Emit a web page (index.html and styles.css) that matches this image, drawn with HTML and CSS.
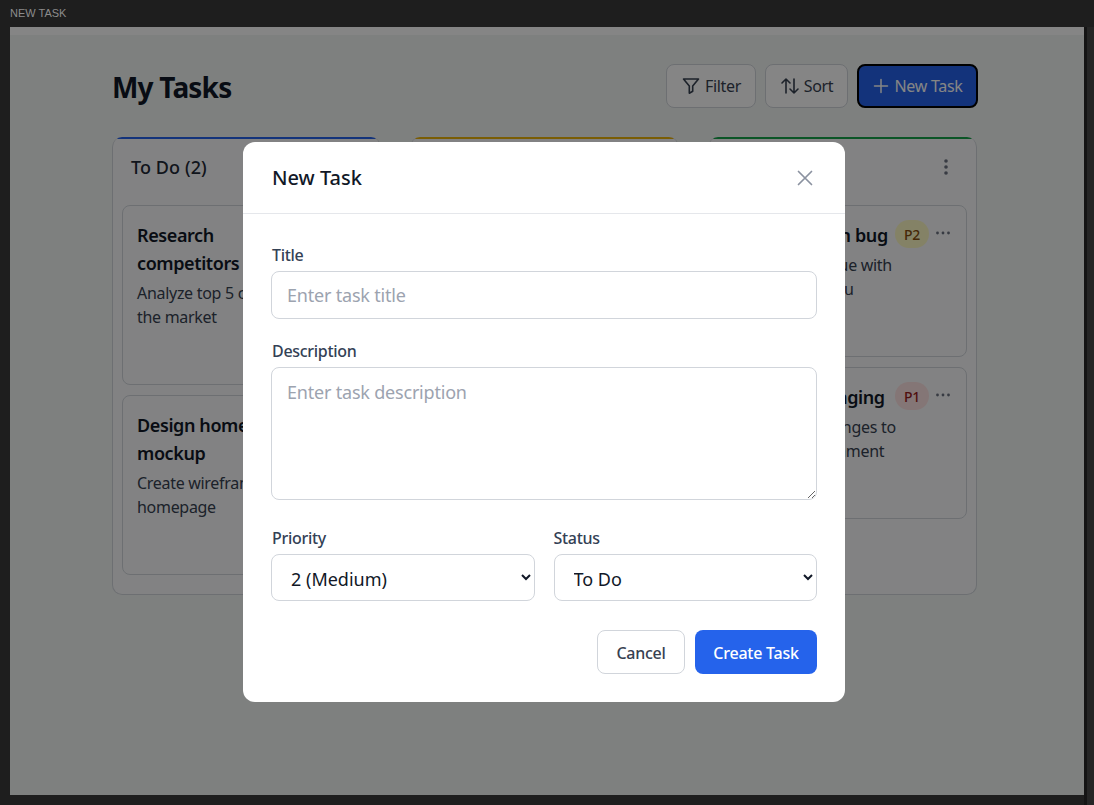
FILE: index.html
```html
<!DOCTYPE html>
<html lang="en">
<head>
    <meta charset="UTF-8" />
    <meta name="viewport" content="width=device-width, initial-scale=1.0"/>
    <title>New Task</title>
    <link rel="stylesheet" href="styles.css">
</head>
<body>
<div class="frame">
    <div class="frame-title">NEW TASK</div>
    <div class="frame-main">
        <div class="stage">
            <div class="strip"></div>
            <div class="page">
                <div class="page-head">
                    <h1>My Tasks</h1>
                    <div class="actions">
                        <button class="btn btn-filter">
                            <svg width="20" height="20" viewBox="0 0 20 20" fill="none" stroke="currentColor" stroke-width="1.6" stroke-linejoin="round"><path d="M2.5 3h15l-5.8 7v5.2l-3.4 2v-7.2z"/></svg>
                            Filter
                        </button>
                        <button class="btn btn-sort">
                            <svg width="20" height="20" viewBox="0 0 20 20" fill="none" stroke="currentColor" stroke-width="1.6" stroke-linecap="round" stroke-linejoin="round"><path d="M6 17V3M2 7l4-4 4 4M14 3v14M10 13l4 4 4-4"/></svg>
                            Sort
                        </button>
                        <button class="btn btn-new">
                            <svg width="18" height="18" viewBox="0 0 18 18" fill="none" stroke="currentColor" stroke-width="1.5" stroke-linecap="round"><path d="M9 2.5v13M2.5 9h13"/></svg>
                            New Task
                        </button>
                    </div>
                </div>

                <div class="board">
                    <!-- To Do -->
                    <section class="column col-todo">
                        <div class="column-head"><h2>To Do (2)</h2></div>
                        <article class="card">
                            <h3>Research<br>competitors</h3>
                            <p>Analyze top 5 competitors in<br>the market</p>
                        </article>
                        <article class="card">
                            <h3>Design homepage<br>mockup</h3>
                            <p>Create wireframes for the<br>homepage</p>
                        </article>
                    </section>

                    <!-- In Progress -->
                    <section class="column col-progress">
                        <div class="column-head"><h2>In Progress (0)</h2></div>
                    </section>

                    <!-- Review -->
                    <section class="column col-review">
                        <div class="column-head">
                            <h2>Review (2)</h2>
                            <svg class="dots" width="6" height="18" viewBox="0 0 6 18" fill="currentColor"><circle cx="3" cy="3" r="1.8"/><circle cx="3" cy="9" r="1.8"/><circle cx="3" cy="15" r="1.8"/></svg>
                        </div>
                        <article class="card">
                            <div class="card-top">
                                <h3>Fix navigation bug</h3>
                                <span class="badge badge-p2">P2</span>
                                <svg class="more" width="16" height="4" viewBox="0 0 16 4" fill="currentColor"><circle cx="2.5" cy="2" r="1.4"/><circle cx="8" cy="2" r="1.4"/><circle cx="13.5" cy="2" r="1.4"/></svg>
                            </div>
                            <p>Resolve the issue with<br>the profile menu</p>
                        </article>
                        <article class="card">
                            <div class="card-top">
                                <h3>Deploy on staging</h3>
                                <span class="badge badge-p1">P1</span>
                                <svg class="more" width="16" height="4" viewBox="0 0 16 4" fill="currentColor"><circle cx="2.5" cy="2" r="1.4"/><circle cx="8" cy="2" r="1.4"/><circle cx="13.5" cy="2" r="1.4"/></svg>
                            </div>
                            <p>Push latest changes to<br>staging environment</p>
                        </article>
                    </section>
                </div>
            </div>

            <!-- Модалка -->
            <div class="overlay">
                <div class="modal">
                    <div class="modal-head">
                        <h2>New Task</h2>
                        <svg class="close" width="20" height="20" viewBox="0 0 20 20" fill="none" stroke="currentColor" stroke-width="1.7" stroke-linecap="round"><path d="M3.5 3.5l13 13M16.5 3.5l-13 13"/></svg>
                    </div>
                    <form class="modal-body">
                        <label for="task-title">Title</label>
                        <input id="task-title" type="text" placeholder="Enter task title">

                        <label for="task-desc">Description</label>
                        <textarea id="task-desc" placeholder="Enter task description"></textarea>

                        <div class="form-row">
                            <div class="form-field">
                                <label for="task-priority">Priority</label>
                                <select id="task-priority">
                                    <option>2 (Medium)</option>
                                </select>
                            </div>
                            <div class="form-field">
                                <label for="task-status">Status</label>
                                <select id="task-status">
                                    <option>To Do</option>
                                </select>
                            </div>
                        </div>

                        <div class="modal-actions">
                            <button type="button" class="btn-cancel">Cancel</button>
                            <button type="button" class="btn-create">Create Task</button>
                        </div>
                    </form>
                </div>
            </div>
        </div>
        <div class="gutter"></div>
    </div>
</div>
</body>
</html>
```

FILE: styles.css
```css
*{box-sizing:border-box;}
html,body{margin:0;height:100%;}
body{background:#1e1e1e;font-family:"Noto Sans",sans-serif;color:#111827;overflow:hidden;}

.frame{height:805px;display:flex;flex-direction:column;}
.frame-title{height:27px;padding-left:10px;font:11px/27px "Liberation Sans",sans-serif;color:#8c8c8c;}
.frame-main{flex:1;display:flex;padding:0 0 10px 10px;}
.stage{flex:1;position:relative;overflow:hidden;background:#f2f6f4;}
.gutter{width:10px;margin-bottom:-10px;background:#252525;border-left:3px solid #141414;}
.strip{height:8px;background:#fff;}

.page{width:865px;margin-left:102px;padding-top:29px;}
.page-head{display:flex;justify-content:space-between;align-items:center;margin-bottom:29px;}
h1{margin:0;padding-top:2px;font-size:28px;line-height:42px;font-weight:700;color:#111827;letter-spacing:-.8px;}
.actions{display:flex;gap:9px;margin-right:-1px;}
.btn{height:44px;display:flex;align-items:center;justify-content:center;gap:4px;font:16px "Noto Sans",sans-serif;letter-spacing:-.3px;border-radius:8px;border:1px solid #d1d5db;background:#fff;color:#374151;padding:0;}
.btn-filter{width:90px;}
.btn-sort{width:83px;}
.btn-new{width:121px;background:#2563eb;color:#fff;border:2px solid #000;}

.board{display:grid;grid-template-columns:repeat(3,1fr);column-gap:29px;}
.column{height:458px;padding:0 9px;background:#f9fafb;border:1px solid #d1d5db;border-top:0;border-radius:10px;overflow:hidden;}
.column::before{content:"";display:block;height:2px;margin:0 -9px;}
.col-todo::before{background:#2563eb;}
.col-progress::before{background:#eab308;}
.col-review::before{background:#16a34a;}
.column-head{height:66px;display:flex;justify-content:space-between;align-items:center;padding:0 9px 10px;}
.column-head h2{margin:0;font-size:18px;font-weight:500;letter-spacing:.1px;color:#1f2937;}
.dots{color:#6b7280;margin-right:9px;}

.card{background:#f9fafb;border:1px solid #d1d5db;border-radius:8px;padding:15px 15px 55px 14px;margin-bottom:10px;}
.card h3{margin:0;font-size:18px;line-height:28px;font-weight:600;letter-spacing:-.4px;color:#111827;white-space:nowrap;}
.card p{margin:4px 0 0;font-size:16px;line-height:24px;letter-spacing:-.3px;color:#374151;white-space:nowrap;}
.card-top{display:flex;align-items:center;}
.card-top h3{flex:1;}
.badge{width:34px;height:28px;flex:none;display:flex;align-items:center;justify-content:center;margin-top:-2px;border-radius:14px;font-size:14px;font-weight:500;letter-spacing:-.3px;}
.badge-p2{background:#fef9c3;color:#854d0e;}
.badge-p1{background:#fee2e2;color:#991b1b;}
.more{margin:-4px 0 0 6px;flex:none;color:#6b7280;}

.overlay{position:absolute;inset:0;background:rgba(0,0,0,.48);display:flex;justify-content:center;align-items:flex-start;padding:115px 6px 0 0;}
.modal{width:602px;height:560px;background:#fff;border-radius:12px;}
.modal-head{height:72px;display:flex;justify-content:space-between;align-items:center;padding:0 29px;border-bottom:1px solid #e5e7eb;}
.modal-head h2{margin:0;font-size:20px;font-weight:500;letter-spacing:0;color:#111827;}
.close{color:#8b92a0;margin-right:1px;}

.modal-body{padding:29px 28px 0;}
.modal-body label{display:block;padding-left:1px;font-size:16px;line-height:24px;font-weight:500;letter-spacing:-.3px;color:#334155;margin-bottom:4px;}
.form-field + .form-field label{padding-left:0;}
input,textarea{display:block;width:100%;font:18px "Noto Sans",sans-serif;letter-spacing:-.2px;color:#111827;background:#fff;border:1px solid #d1d5db;border-radius:8px;padding:0 15px;}
input{height:48px;margin-bottom:20px;}
textarea{height:133px;padding-top:11px;line-height:26px;margin-bottom:26px;}
input::placeholder,textarea::placeholder{color:#9ca3af;opacity:1;}
.form-row{display:grid;grid-template-columns:1fr 1fr;column-gap:19px;}
select{display:block;width:100%;height:47px;font:18px "Noto Sans",sans-serif;color:#111827;background:#fff;border:1px solid #d1d5db;border-radius:8px;padding:2px 15px 0;}
.modal-actions{display:flex;justify-content:flex-end;gap:10px;margin-top:29px;}
.modal-actions button{height:44px;padding:2px 0 0;font:500 16px "Noto Sans",sans-serif;letter-spacing:-.25px;border-radius:8px;}
.btn-cancel{width:88px;background:#fff;border:1px solid #d1d5db;color:#374151;}
.btn-create{width:122px;background:#2563eb;border:0;color:#fff;}
```
